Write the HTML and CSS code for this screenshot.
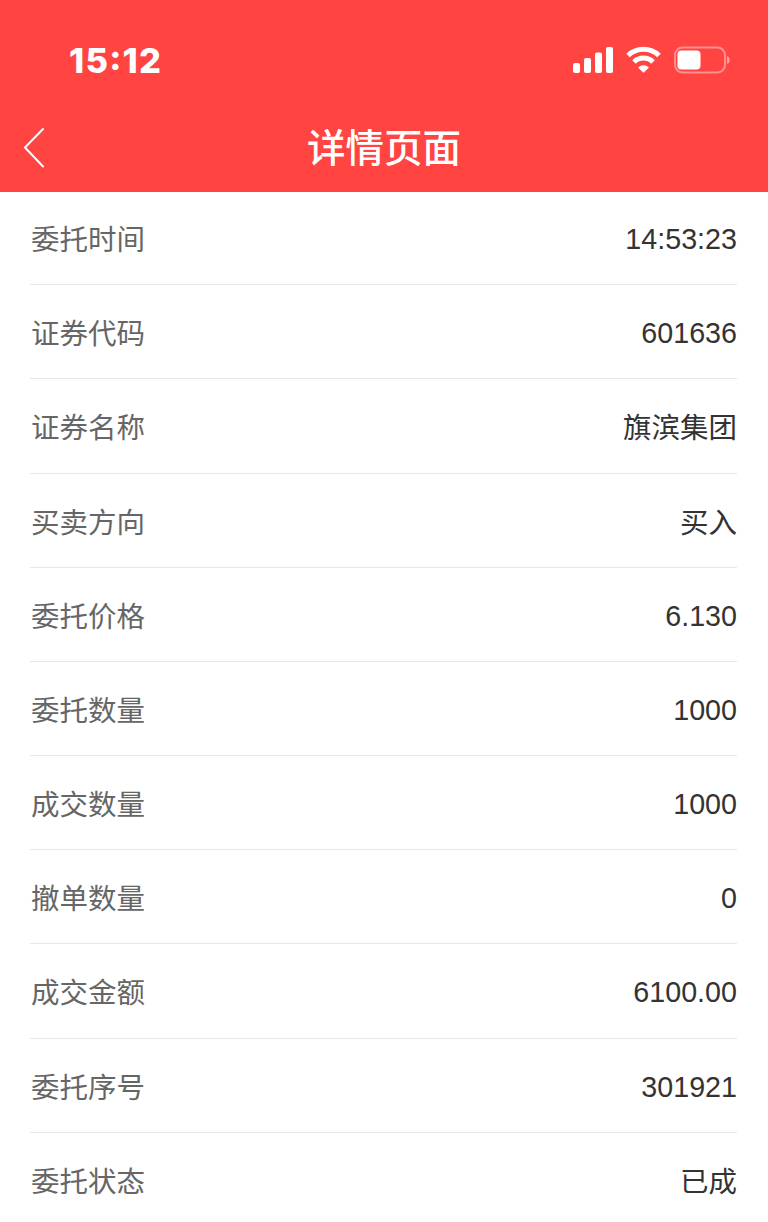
FILE: index.html
```html
<!DOCTYPE html>
<html lang="zh-CN">
<head>
<meta charset="utf-8">
<title>详情页面</title>
<link rel="stylesheet" href="styles.css">
</head>
<body>
<header class="header">
  <div class="status">
    <span class="clock">15<span class="colon">:</span>12</span>
    <svg class="indicators" viewBox="0 0 160 32" aria-hidden="true">
      <g fill="#fff">
        <rect x="1" y="19" width="7" height="10" rx="2"/>
        <rect x="12" y="14" width="7" height="15" rx="2"/>
        <rect x="23" y="8.500" width="7" height="20.500" rx="2"/>
        <rect x="34" y="3" width="7" height="26" rx="2"/>
        <rect x="105.500" y="6.500" width="23" height="19" rx="4"/>
      </g>
      <g fill="none" stroke="#fff" stroke-width="5">
        <path d="M56 11.500a22.500 22.500 0 0 1 31 0"/>
        <path d="M62 18a13.500 13.500 0 0 1 19 0"/>
      </g>
      <path fill="#fff" d="M66 23.500a8 8 0 0 1 11 0l-4.800 4.700q-.7.600-1.400 0z"/>
      <rect x="103" y="3.500" width="50" height="25" rx="7.500" fill="none" stroke="#fff" stroke-opacity=".42" stroke-width="2"/>
      <path fill="#fff" fill-opacity=".5" d="M155 12q2.700 1 2.700 4t-2.700 4z"/>
    </svg>
  </div>
  <div class="nav">
    <svg class="back" viewBox="0 0 24 42" aria-hidden="true"><path d="M21 2L3 20.500l18 19"/></svg>
    <h1 class="title">详情页面</h1>
  </div>
</header>
<dl class="details">
  <div class="row"><dt>委托时间</dt><dd>14:53:23</dd></div>
  <div class="row"><dt>证券代码</dt><dd>601636</dd></div>
  <div class="row"><dt>证券名称</dt><dd class="hanzi">旗滨集团</dd></div>
  <div class="row"><dt>买卖方向</dt><dd class="hanzi">买入</dd></div>
  <div class="row"><dt>委托价格</dt><dd>6.130</dd></div>
  <div class="row"><dt>委托数量</dt><dd>1000</dd></div>
  <div class="row"><dt>成交数量</dt><dd>1000</dd></div>
  <div class="row"><dt>撤单数量</dt><dd>0</dd></div>
  <div class="row"><dt>成交金额</dt><dd>6100.00</dd></div>
  <div class="row"><dt>委托序号</dt><dd>301921</dd></div>
  <div class="row"><dt>委托状态</dt><dd class="hanzi">已成</dd></div>
</dl>
</body>
</html>
```
FILE: styles.css
```css
* { box-sizing: border-box; }
body {
  margin: 0;
  height: 1222px;
  overflow: hidden;
  background: #fff;
  font-family: "Liberation Sans", "Noto Sans CJK SC", sans-serif;
}
.header {
  height: 192px;
  background: #ff4441;
  color: #fff;
}
.status {
  display: flex;
  justify-content: space-between;
  height: 104px;
  padding: 44px 36px 0 69px;
}
.clock {
  font: 800 34.500px/34px Inter, sans-serif;
  letter-spacing: 1.200px;
}
.colon { line-height: 0; vertical-align: 3px; }
.indicators { width: 160px; height: 32px; }
.nav {
  display: grid;
  grid-template-columns: 72px 1fr 72px;
  align-items: center;
  height: 88px;
}
.back {
  width: 24px;
  height: 42px;
  margin-left: 22px;
  fill: none;
  stroke: #fff;
  stroke-width: 2;
  stroke-linecap: round;
}
.title {
  margin: 0;
  padding-top: 2px;
  font-size: 38.500px;
  font-weight: 500;
  line-height: 56px;
  text-align: center;
}
.details { margin: -1px 0 0; padding: 0 31px 0 30px; }
.row {
  display: flex;
  justify-content: space-between;
  align-items: center;
  height: 94.180px;
  padding: 3px 0 0 1px;
  border-bottom: 1px solid #e8e8e8;
  font-size: 28.500px;
  line-height: 42px;
}
dt { padding-top: 2px; color: #666; }
dd { margin: 0; color: #333; font-size: 28.700px; }
.hanzi { padding-top: 2px; font-size: 28.500px; }
```
